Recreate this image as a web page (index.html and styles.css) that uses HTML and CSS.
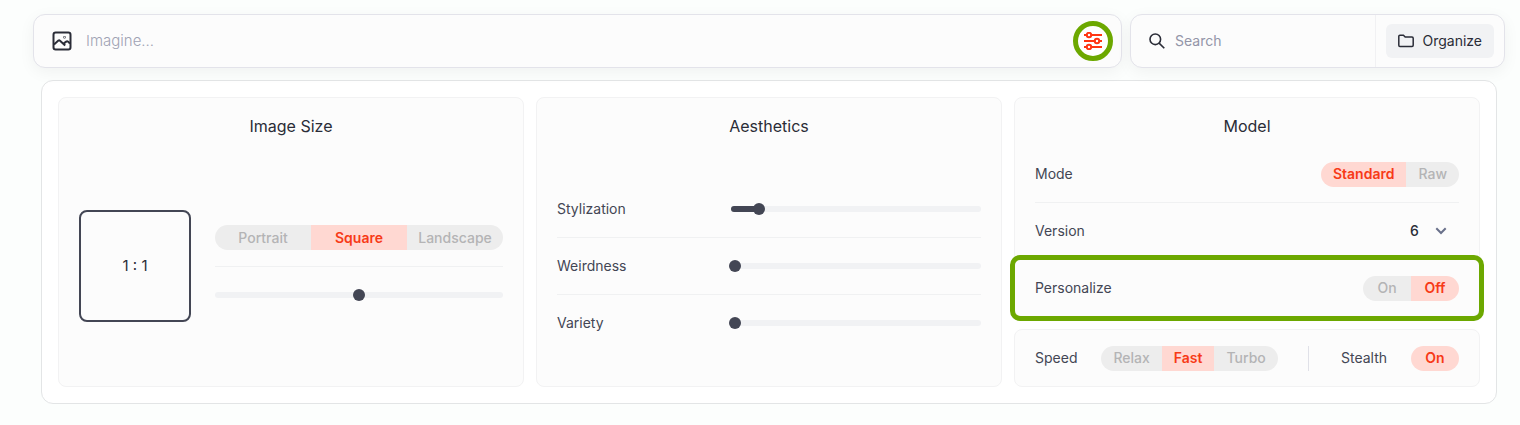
FILE: index.html
```html
<!DOCTYPE html>
<html lang="en">
<head>
  <meta charset="UTF-8">
  <meta name="viewport" content="width=device-width, initial-scale=1.0">
  <title>Imagine</title>
  <link rel="stylesheet" href="styles.css">
</head>
<body>
  <header class="topbar">
    <form class="bar imagine">
      <svg class="icon-image" viewBox="0 0 20 20" width="20" height="20" aria-hidden="true">
        <rect x="1.5" y="1.5" width="17" height="17" rx="2.2"/>
        <path d="M2 13.5 6.4 9.6Q7.2 9 8 9.7L13.2 14.6M11.5 12.6 14.2 10.6Q15.2 10 16.2 10.8L18 12.4"/>
        <circle cx="12.5" cy="6.2" r="0.3"/>
      </svg>
      <input type="text" placeholder="Imagine..." aria-label="Imagine">
      <button type="button" class="settings" aria-label="Settings">
        <svg viewBox="0 0 18 18" width="18" height="18" aria-hidden="true">
          <path d="M0 3H2.5M7.5 3H18M0 9H10.5M15.5 9H18M0 15H2.5M7.5 15H18"/>
          <circle cx="5" cy="3" r="2.2"/>
          <circle cx="13" cy="9" r="2.2"/>
          <circle cx="5" cy="15" r="2.2"/>
        </svg>
      </button>
    </form>
    <div class="bar search">
      <label class="search-field">
        <svg viewBox="0 0 16 16" width="16" height="16" aria-hidden="true">
          <circle cx="6.3" cy="6.3" r="5.3"/>
          <path d="M10.1 10.1 15.3 15.3"/>
        </svg>
        <input type="search" placeholder="Search" aria-label="Search">
      </label>
      <div class="organize">
        <button type="button">
          <svg viewBox="0 0 16 14" width="16" height="14" aria-hidden="true">
            <path d="M.8 2.3Q.8 1.2 1.9 1.2H5.4L7.2 3.1H14Q15.2 3.1 15.2 4.2V11.2Q15.2 12.4 14 12.4H1.9Q.8 12.4 .8 11.2Z"/>
          </svg>
          Organize
        </button>
      </div>
    </div>
  </header>

  <main class="panel">
    <section class="card">
      <h2>Image Size</h2>
      <div class="size">
        <div class="ratio">1 : 1</div>
        <div class="size-options">
          <div class="row">
            <div class="segment wide" role="group" aria-label="Orientation">
              <button type="button">Portrait</button>
              <button type="button" class="active">Square</button>
              <button type="button">Landscape</button>
            </div>
          </div>
          <div class="row">
            <input type="range" class="slider" min="0" max="100" value="50" aria-label="Aspect ratio">
          </div>
        </div>
      </div>
    </section>

    <section class="card">
      <h2>Aesthetics</h2>
      <div class="rows">
        <div class="row">
          <label for="stylization">Stylization</label>
          <input type="range" class="slider filled" id="stylization" min="0" max="1000" value="100" style="--fill: 10%">
        </div>
        <div class="row">
          <label for="weirdness">Weirdness</label>
          <input type="range" class="slider" id="weirdness" min="0" max="3000" value="0">
        </div>
        <div class="row">
          <label for="variety">Variety</label>
          <input type="range" class="slider" id="variety" min="0" max="100" value="0">
        </div>
      </div>
    </section>

    <div class="column">
      <section class="card">
        <h2>Model</h2>
        <div class="rows">
          <div class="row">
            <span>Mode</span>
            <div class="segment" role="group" aria-label="Mode">
              <button type="button" class="active">Standard</button>
              <button type="button">Raw</button>
            </div>
          </div>
          <div class="row">
            <label for="version">Version</label>
            <div class="version">
              <select id="version">
                <option>6</option>
              </select>
              <svg viewBox="0 0 12 8" width="12" height="8" aria-hidden="true">
                <path d="M1.3 1.3 6 6 10.7 1.3"/>
              </svg>
            </div>
          </div>
          <div class="row highlight">
            <span>Personalize</span>
            <div class="segment" role="group" aria-label="Personalize">
              <button type="button">On</button>
              <button type="button" class="active">Off</button>
            </div>
          </div>
        </div>
      </section>
      <section class="card speed">
        <div class="option">
          <span>Speed</span>
          <div class="segment" role="group" aria-label="Speed">
            <button type="button">Relax</button>
            <button type="button" class="active">Fast</button>
            <button type="button">Turbo</button>
          </div>
        </div>
        <div class="option stealth">
          <span>Stealth</span>
          <div class="segment" role="group" aria-label="Stealth">
            <button type="button" class="active">On</button>
          </div>
        </div>
      </section>
    </div>
  </main>
</body>
</html>
```
FILE: styles.css
```css
* {
  box-sizing: border-box;
}

body {
  margin: 0;
  padding: 14px 15px 21px 33px;
  font-family: "Inter", "Liberation Sans", sans-serif;
  font-size: 14px;
  line-height: 24px;
  color: #434654;
  background-color: #fcfefd;
}

button, input, select {
  font: inherit;
  color: inherit;
}

button {
  border: none;
  cursor: pointer;
}

svg {
  flex: none;
  fill: none;
  stroke: currentColor;
}

/* top bar */
.topbar {
  display: flex;
  gap: 8px;
}

.bar {
  display: flex;
  align-items: center;
  min-width: 0;
  height: 54px;
  background-color: #fcfcfc;
  border: 1px solid #e3e3ea;
  border-radius: 12px;
  box-shadow: 0 4px 16px rgba(0, 0, 0, 0.05);
}

.bar input {
  flex: 1;
  min-width: 0;
  padding: 0;
  border: none;
  outline: none;
  background: none;
}

.bar input::placeholder {
  color: #a0a3b4;
  opacity: 1;
}

.imagine {
  flex: 1;
  gap: 14px;
  padding: 0 8px 0 18px;
}

.imagine input {
  font-size: 15px;
  font-weight: 300;
}

.icon-image {
  color: #2a2c37;
  stroke-width: 2;
}

.settings {
  display: flex;
  align-items: center;
  justify-content: center;
  width: 40px;
  height: 40px;
  padding: 0;
  color: #ff3512;
  background-color: #fff;
  border: 5px solid #6ca800;
  border-radius: 50%;
}

.settings svg {
  stroke-width: 2;
}

.search {
  flex: 0 1 375px;
  color: #2a2c37;
}

.search-field {
  display: flex;
  flex: 1;
  align-items: center;
  gap: 10px;
  min-width: 0;
  padding: 0 18px;
}

.search-field svg {
  stroke-width: 1.6;
}

.bar .search-field input::placeholder {
  color: #9395a8;
}

.organize {
  display: flex;
  align-items: center;
  height: 100%;
  padding: 0 10px;
  border-left: 1px solid #f1f1f3;
}

.organize button {
  display: flex;
  align-items: center;
  gap: 8px;
  height: 34px;
  padding: 0 12px;
  background-color: #f1f2f4;
  border-radius: 6px;
}

.organize svg {
  stroke-width: 1.5;
}

/* settings panel */
.panel {
  display: grid;
  grid-template-columns: repeat(3, 1fr);
  gap: 12px;
  margin: 12px 8px 0;
  padding: 16px;
  background-color: #fff;
  border: 1px solid #e3e5e6;
  border-radius: 12px;
}

.column {
  display: flex;
  flex-direction: column;
  gap: 12px;
}

.card {
  display: flex;
  flex-direction: column;
  padding: 16px 20px 0;
  background-color: #fcfcfc;
  border: 1px solid #f2f2f3;
  border-radius: 8px;
}

.card h2 {
  margin: 0 0 8px;
  font-size: 16px;
  font-weight: 400;
  text-align: center;
  color: #2a2c37;
}

.rows {
  margin: auto 0;
}

.row {
  display: flex;
  align-items: center;
  justify-content: space-between;
  height: 56px;
}

.row + .row {
  height: 57px;
  border-top: 1px solid #f0f1f2;
}

.size {
  display: flex;
  align-items: center;
  gap: 24px;
  margin: auto 0;
}

.ratio {
  display: flex;
  align-items: center;
  justify-content: center;
  width: 112px;
  height: 112px;
  font-size: 15px;
  color: #2a2c37;
  border: 2px solid #434654;
  border-radius: 8px;
}

.size-options {
  flex: 1;
}

/* segmented buttons */
.segment {
  display: flex;
  overflow: hidden;
  border-radius: 13px;
}

.segment button {
  min-width: 48px;
  height: 25px;
  padding: 0 12px;
  font-weight: 500;
  color: #b4b4b5;
  background-color: #ededed;
}

.segment .active {
  font-weight: 600;
  color: #f73a17;
  background-color: #ffd8d2;
}

.wide {
  width: 100%;
}

.wide button {
  flex: 1 1 0;
  padding: 0;
}

/* sliders */
.slider {
  appearance: none;
  width: 250px;
  height: 6px;
  margin: 0;
  background-color: #f1f2f4;
  border-radius: 3px;
}

.size-options .slider {
  width: 100%;
}

.filled {
  background-image: linear-gradient(to right, #434654 var(--fill), transparent var(--fill));
}

.slider::-webkit-slider-runnable-track {
  height: 6px;
  margin: 0 -2px;
}

.slider::-webkit-slider-thumb {
  appearance: none;
  width: 12px;
  height: 12px;
  margin-top: -3px;
  background-color: #434654;
  border-radius: 50%;
}

.version {
  display: flex;
  align-items: center;
  gap: 16px;
  padding-right: 12px;
  color: #69708a;
}

.version select {
  appearance: none;
  padding: 0;
  font-weight: 500;
  color: #2a2c37;
  background: none;
  border: none;
}

.version svg {
  stroke-width: 2;
}

.highlight {
  position: relative;
}

.highlight::after {
  content: "";
  position: absolute;
  inset: -5px -25px;
  border: 5px solid #6ca800;
  border-radius: 10px;
  pointer-events: none;
}

.speed {
  flex-direction: row;
  align-items: center;
  justify-content: space-between;
  height: 58px;
  padding: 0 20px;
}

.option {
  display: flex;
  align-items: center;
  gap: 24px;
}

.stealth {
  padding-left: 32px;
  border-left: 1px solid #e0e1e8;
}

@media screen and (max-width: 1200px) {
  .panel {
    grid-template-columns: 1fr;
  }

  .card {
    padding-bottom: 16px;
  }
}
```
